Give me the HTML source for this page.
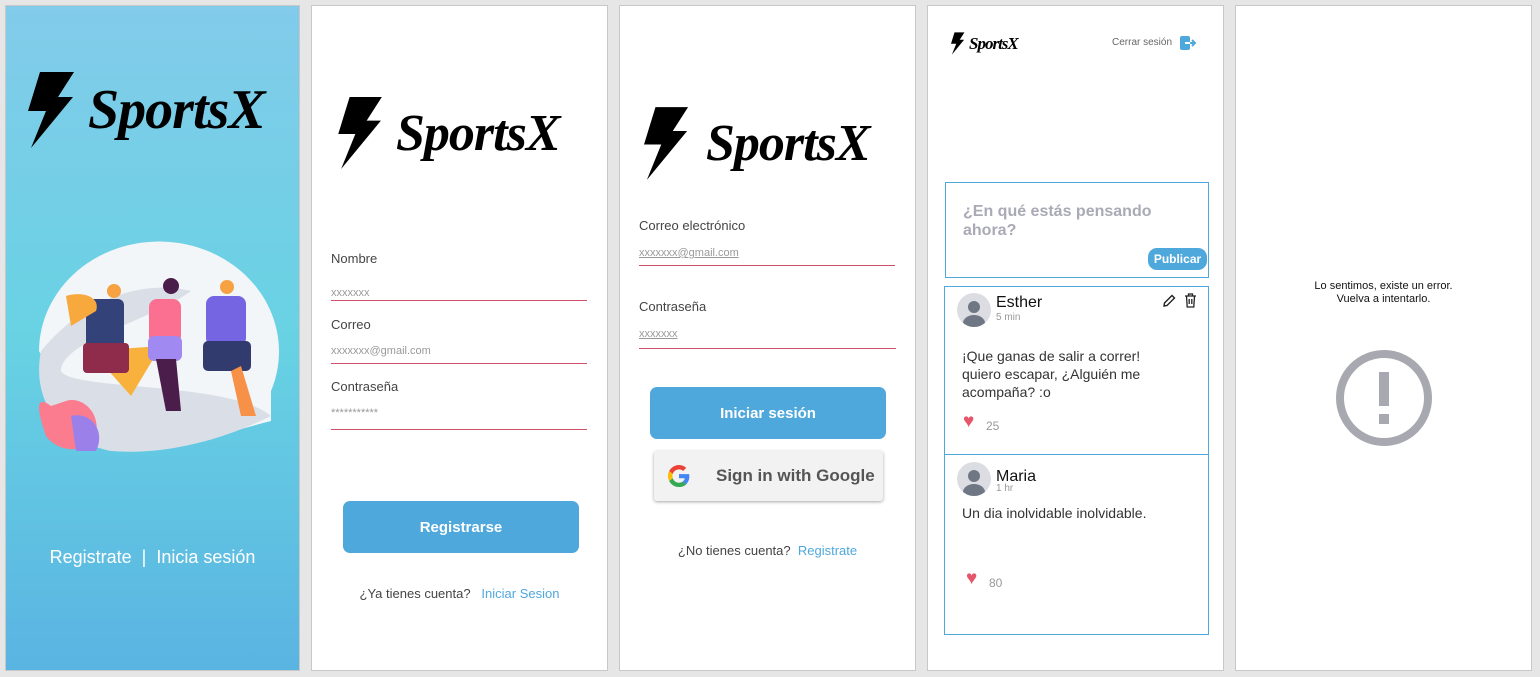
<!DOCTYPE html>
<html><head><meta charset="utf-8"><style>
*{box-sizing:border-box;margin:0;padding:0}
body{width:1540px;height:677px;background:#e6e6e6;position:relative;overflow:hidden;font-family:"Liberation Sans",sans-serif}
.p{position:absolute;top:5px;width:297px;height:666px;background:#fff;border:1px solid #c8c8c8}
.a{position:absolute}
.logo{position:absolute;display:flex;align-items:center}
.logo span{font-family:"Liberation Serif",serif;font-style:italic;font-weight:bold;color:#000;letter-spacing:-1px}
.lab{position:absolute;font-size:13px;color:#444}
.ph{position:absolute;font-size:11px;color:#999}
.ln{position:absolute;height:1px;background:#d0506a}
.btn{position:absolute;background:#4fa8dc;color:#fff;border-radius:7px;font-weight:bold;font-size:15px;display:flex;align-items:center;justify-content:center}
</style></head><body>

<!-- Panel 1 -->
<div class="p" style="left:5px;width:295px;background:linear-gradient(#82cbea,#68d2e3 50%,#5ab4e2)">
 <div class="logo" style="left:22px;top:66px">
  <svg width="48" height="76" viewBox="0 0 48 76"><polygon points="12,0 46,0 30,25 45,25 3,76 18,39 0,39" fill="#000"/></svg>
  <span style="font-size:56px;margin-left:12px">SportsX</span>
 </div>
 <svg class="a" style="left:25px;top:215px" width="250" height="240" viewBox="0 0 250 240">
  <path d="M8,130 A120,110 0 1 1 240,170 L240,200 C180,215 120,240 60,225 Z" fill="#f2f6f9"/>
  <path d="M10,130 C60,70 120,60 160,70 C120,100 30,120 30,150 C40,170 200,160 240,195 C200,215 140,235 80,230 C30,220 0,180 10,130Z" fill="#dadfe7"/>
  <path d="M60,130 L130,125 L100,175 Z" fill="#f9b13e"/>
  <rect x="55" y="78" width="38" height="50" rx="6" fill="#34427a"/>
  <rect x="52" y="122" width="46" height="30" rx="4" fill="#8f2c4c"/>
  <path d="M35,75 C50,70 70,75 65,90 L40,105 Z" fill="#f8a93e"/>
  <circle cx="83" cy="70" r="7" fill="#f6a142"/>
  <rect x="118" y="78" width="32" height="45" rx="8" fill="#fb6f91"/>
  <rect x="117" y="115" width="34" height="25" rx="6" fill="#a08af2"/>
  <path d="M125,138 L135,190 L150,190 L145,138Z" fill="#4b1d4a"/>
  <circle cx="140" cy="65" r="8" fill="#4b1d4a"/>
  <rect x="175" y="75" width="40" height="50" rx="8" fill="#7565e3"/>
  <rect x="172" y="120" width="48" height="30" rx="5" fill="#323b6e"/>
  <path d="M210,145 L225,195 L210,195 L200,150Z" fill="#f69147"/>
  <circle cx="196" cy="66" r="7" fill="#f6a142"/>
  <path d="M20,185 C0,170 10,200 15,215 C30,235 60,230 65,215 C70,190 50,175 35,180 Z" fill="#fb7c8e"/>
  <path d="M40,195 C60,190 75,210 65,230 L45,230 Z" fill="#9b80ea"/>
 </svg>
 <div class="a" style="left:0;width:293px;top:541px;text-align:center;color:#fff;font-size:18px">Registrate &nbsp;|&nbsp; Inicia sesión</div>
</div>

<!-- Panel 2 -->
<div class="p" style="left:311px">
 <div class="logo" style="left:26px;top:91px">
  <svg width="46" height="72" viewBox="0 0 48 76"><polygon points="12,0 46,0 30,25 45,25 3,76 18,39 0,39" fill="#000"/></svg>
  <span style="font-size:52px;margin-left:12px">SportsX</span>
 </div>
 <div class="lab" style="left:19px;top:245px">Nombre</div>
 <div class="ph" style="left:19px;top:281px">xxxxxxx</div>
 <div class="ln" style="left:19px;top:294px;width:256px"></div>
 <div class="lab" style="left:19px;top:311px">Correo</div>
 <div class="ph" style="left:19px;top:339px">xxxxxxx@gmail.com</div>
 <div class="ln" style="left:19px;top:357px;width:256px"></div>
 <div class="lab" style="left:19px;top:373px">Contraseña</div>
 <div class="ph" style="left:19px;top:401px">***********</div>
 <div class="ln" style="left:19px;top:423px;width:256px"></div>
 <div class="btn" style="left:31px;top:495px;width:236px;height:52px">Registrarse</div>
 <div class="a" style="left:0;width:295px;top:580px;text-align:center;font-size:13px;color:#444">¿Ya tienes cuenta? &nbsp;&nbsp;<span style="color:#4fa8dc">Iniciar Sesion</span></div>
</div>

<!-- Panel 3 -->
<div class="p" style="left:619px">
 <div class="logo" style="left:24px;top:100px">
  <svg width="46" height="75" viewBox="0 0 48 76"><polygon points="12,0 46,0 30,25 45,25 3,76 18,39 0,39" fill="#000"/></svg>
  <span style="font-size:52px;margin-left:16px">SportsX</span>
 </div>
 <div class="lab" style="left:19px;top:212px">Correo electrónico</div>
 <div class="ph" style="left:19px;top:241px;text-decoration:underline">xxxxxxx@gmail.com</div>
 <div class="ln" style="left:19px;top:259px;width:256px"></div>
 <div class="lab" style="left:19px;top:293px">Contraseña</div>
 <div class="ph" style="left:19px;top:322px;text-decoration:underline">xxxxxxx</div>
 <div class="ln" style="left:19px;top:342px;width:257px"></div>
 <div class="btn" style="left:30px;top:381px;width:236px;height:52px">Iniciar sesión</div>
 <div class="a" style="left:34px;top:445px;width:229px;height:50px;background:#f2f2f2;border-radius:3px;box-shadow:0 1px 3px rgba(0,0,0,.35);display:flex;align-items:center">
  <svg style="margin-left:14px" width="22" height="22" viewBox="0 0 48 48"><path fill="#EA4335" d="M24 9.5c3.5 0 6.6 1.2 9 3.5l6.7-6.7C35.6 2.4 30.2 0 24 0 14.6 0 6.6 5.4 2.6 13.3l7.8 6C12.3 13.6 17.7 9.5 24 9.5z"/><path fill="#4285F4" d="M46.5 24.5c0-1.6-.1-3.1-.4-4.5H24v9h12.7c-.6 3-2.300 5.5-4.8 7.2l7.6 5.9c4.4-4.1 7-10.1 7-17.6z"/><path fill="#FBBC05" d="M10.4 28.7c-.5-1.4-.8-3-.8-4.7s.3-3.2.8-4.7l-7.8-6C.9 16.5 0 20.1 0 24s.9 7.5 2.6 10.7l7.8-6z"/><path fill="#34A853" d="M24 48c6.5 0 11.9-2.1 15.9-5.8l-7.6-5.9c-2.1 1.4-4.9 2.3-8.3 2.3-6.3 0-11.7-4.100-13.6-9.8l-7.8 6C6.6 42.6 14.6 48 24 48z"/></svg>
  <span style="margin-left:26px;font-size:17px;font-weight:bold;color:#555">Sign in with Google</span>
 </div>
 <div class="a" style="left:0;width:295px;top:537px;text-align:center;font-size:13px;color:#444">¿No tienes cuenta? &nbsp;<span style="color:#4fa8dc">Registrate</span></div>
</div>

<!-- Panel 4 -->
<div class="p" style="left:927px">
 <div class="logo" style="left:23px;top:26px">
  <svg width="14" height="23" viewBox="0 0 48 76"><polygon points="12,0 46,0 30,25 45,25 3,76 18,39 0,39" fill="#000"/></svg>
  <span style="font-size:17px;margin-left:4px">SportsX</span>
 </div>
 <div class="a" style="left:184px;top:31px;font-size:10px;color:#666">Cerrar sesión</div>
 <svg class="a" style="left:252px;top:30px" width="17" height="14" viewBox="0 0 17 14"><rect x="0" y="0" width="10" height="14" rx="2" fill="#4fa8dc"/><path d="M5,7 H15 M12,4 L15,7 L12,10" stroke="#4fa8dc" stroke-width="2" fill="none"/><path d="M5,7 H10" stroke="#fff" stroke-width="2"/></svg>
 <div class="a" style="left:17px;top:176px;width:264px;height:96px;border:1px solid #4fa8dc">
  <div style="position:absolute;left:17px;top:19px;font-size:16px;font-weight:bold;color:#a9aab5;line-height:19px">¿En qué estás pensando<br>ahora?</div>
  <div style="position:absolute;left:202px;top:65px;width:59px;height:22px;border-radius:9px;background:#4fa8dc;color:#fff;font-weight:bold;font-size:12px;display:flex;align-items:center;justify-content:center">Publicar</div>
 </div>
 <div class="a" style="left:16px;top:280px;width:265px;height:349px;border:1px solid #4fa8dc">
  <div style="position:absolute;left:12px;top:6px;width:34px;height:34px;border-radius:50%;background:#dcdde2;overflow:hidden">
   <div style="position:absolute;left:11px;top:8px;width:12px;height:12px;border-radius:50%;background:#707784"></div>
   <div style="position:absolute;left:6px;top:22px;width:22px;height:16px;border-radius:50%;background:#707784"></div></div>
  <div style="position:absolute;left:51px;top:7px;font-size:16px;color:#111">Esther</div>
  <div style="position:absolute;left:51px;top:25px;font-size:10px;color:#999">5 min</div>
  <svg style="position:absolute;left:217px;top:7px" width="14" height="14" viewBox="0 0 14 14"><path d="M2,12 L2.5,9 L10,1.5 L12.5,4 L5,11.5 Z" fill="none" stroke="#222" stroke-width="1.4"/></svg>
  <svg style="position:absolute;left:239px;top:6px" width="13" height="15" viewBox="0 0 13 15"><path d="M1,3 H12 M4.5,3 V1 H8.5 V3 M2.5,3 L3.2,14 H9.8 L10.5,3 M5.2,6 V11 M7.8,6 V11" fill="none" stroke="#222" stroke-width="1.3"/></svg>
  <div style="position:absolute;left:17px;top:60px;font-size:14px;color:#333;line-height:18px">¡Que ganas de salir a correr!<br>quiero escapar, ¿Alguién me<br>acompaña? :o</div>
  <div style="position:absolute;left:18px;top:124px;font-size:19px;color:#e5566a">♥</div>
  <div style="position:absolute;left:41px;top:132px;font-size:12px;color:#999">25</div>
  <div style="position:absolute;left:0;top:167px;width:263px;height:1px;background:#4fa8dc"></div>
  <div style="position:absolute;left:12px;top:175px;width:34px;height:34px;border-radius:50%;background:#dcdde2;overflow:hidden">
   <div style="position:absolute;left:11px;top:8px;width:12px;height:12px;border-radius:50%;background:#707784"></div>
   <div style="position:absolute;left:6px;top:22px;width:22px;height:16px;border-radius:50%;background:#707784"></div></div>
  <div style="position:absolute;left:51px;top:181px;font-size:16px;color:#111">Maria</div>
  <div style="position:absolute;left:51px;top:196px;font-size:10px;color:#999">1 hr</div>
  <div style="position:absolute;left:17px;top:218px;font-size:14px;color:#333">Un dia inolvidable inolvidable.</div>
  <div style="position:absolute;left:21px;top:281px;font-size:19px;color:#e5566a">♥</div>
  <div style="position:absolute;left:44px;top:289px;font-size:12px;color:#999">80</div>
 </div>
</div>

<!-- Panel 5 -->
<div class="p" style="left:1235px">
 <div class="a" style="left:0;width:295px;top:274px;text-align:center;font-size:11px;color:#111;line-height:13px;height:24px;overflow:hidden">Lo sentimos, existe un error.<br>Vuelva a intentarlo.</div>
 <svg class="a" style="left:98px;top:342px" width="100" height="100" viewBox="0 0 100 100"><circle cx="50" cy="50" r="44" fill="none" stroke="#a8a9b0" stroke-width="8"/><rect x="45" y="24" width="10" height="34" fill="#a8a9b0"/><rect x="45" y="66" width="10" height="10" fill="#a8a9b0"/></svg>
</div>
</body></html>
